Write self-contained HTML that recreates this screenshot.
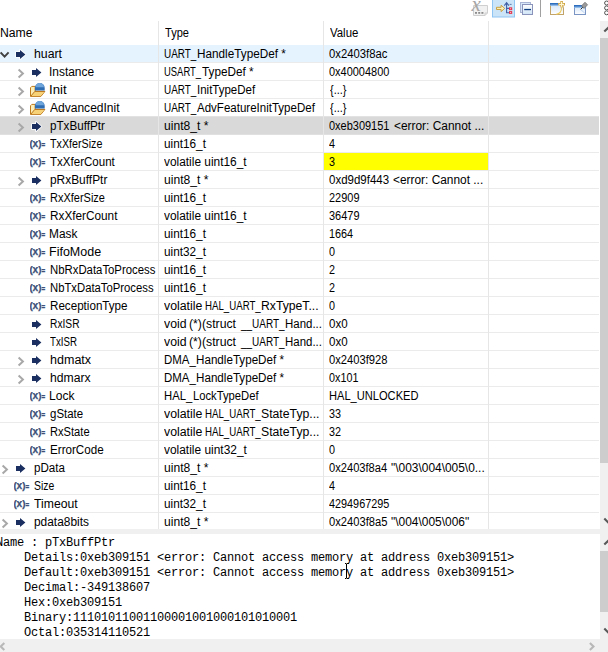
<!DOCTYPE html>
<html><head><meta charset="utf-8"><title>Variables</title>
<style>
html,body{margin:0;padding:0;background:#fff;}
body{width:608px;height:652px;overflow:hidden;position:relative;font-family:"Liberation Sans",sans-serif;font-size:12px;color:#000;}
#tb{position:absolute;left:0;top:0;width:608px;height:21px;background:#fff;}
#tb svg{position:absolute;top:0;}
#tree{position:absolute;left:0;top:21px;width:600px;height:508px;overflow:hidden;background:#fff;}
#hdr{position:absolute;left:0;top:0;width:600px;height:24px;}
#hdr span{position:absolute;top:5px;line-height:14px;white-space:nowrap;transform-origin:0 0;}
.r{position:absolute;left:0;width:599px;height:17px;border-bottom:1px solid #ebebeb;}
.r.hover{background:#e5f3ff;}
.r.sel{background:#d9d9d9;border-bottom-color:#e0e0e0;}
.r span{position:absolute;top:1px;line-height:17px;height:17px;white-space:nowrap;transform-origin:0 0;}
.c{position:absolute;top:0;height:17px;overflow:hidden;}
.r .ic{position:absolute;top:1px;}
.r .ch{position:absolute;top:1px;}
.chg{position:absolute;left:324px;top:0;width:164px;height:17px;background:#ffff00;}
.vl{position:absolute;top:0;width:1px;height:508px;background:#e6e6e6;}
.sb{position:absolute;background:#f0f0f0;}
.th{position:absolute;background:#cdcdcd;}
#sash{position:absolute;left:0;top:529px;width:608px;height:5px;background:#f0f0f0;}
#det{position:absolute;left:0;top:534px;width:600px;height:105px;background:#fff;overflow:hidden;}
#det pre{margin:0;position:absolute;left:-4px;top:2px;font-family:"Liberation Mono",monospace;font-size:12px;line-height:15px;letter-spacing:-0.2px;white-space:pre;}
</style></head><body>

<div id="tb">
<svg width="608" height="21" viewBox="0 0 608 21" style="left:0">
<defs>
<linearGradient id="gb" x1="0" y1="0" x2="0" y2="1"><stop offset="0" stop-color="#cfe3f8"/><stop offset="1" stop-color="#ffffff"/></linearGradient>
<linearGradient id="gc" x1="0" y1="0" x2="0" y2="1"><stop offset="0" stop-color="#ffffff"/><stop offset="1" stop-color="#cfe4f7"/></linearGradient>
</defs>
<!-- icon1: disabled show type names -->
<path d="M473.5 5.5h14v7.5l-2.5 2.5h-11.5z" fill="#f1f1f1" stroke="#cfcfcf"/>
<path d="M485 15.5v-2.5h2.5" fill="none" stroke="#cfcfcf"/>
<rect x="475" y="12" width="2" height="1.8" fill="#8c8c8c"/><rect x="478.2" y="12" width="2" height="1.8" fill="#8c8c8c"/><rect x="481.4" y="12" width="2" height="1.8" fill="#8c8c8c"/>
<text x="471.6" y="11.2" font-family="Liberation Serif, serif" font-style="italic" font-size="21" fill="#a6a6a6">x</text>
<!-- icon2: selected bg -->
<rect x="492.5" y="-3" width="22" height="20" fill="#cce4f7" stroke="#8fc5f2"/>
<path d="M496.5 7.3h4.6V5.2l3.6 3.2-3.6 3.2V9.5h-4.6z" fill="#fdf0b4" stroke="#c9a043" stroke-width="1" stroke-linejoin="round"/>
<path d="M506.6 13.2V3.5M504.3 5.6l2.3-3 2.3 3M506.6 8.4h2.6M506.6 12.8h2.6" fill="none" stroke="#3f5fa6" stroke-width="1.1"/>
<path d="M509.6 4.4h2" stroke="#5f7fb0" stroke-width="1"/>
<rect x="509" y="7.3" width="3.2" height="2.8" fill="#e2344c"/><rect x="509" y="11.1" width="3.2" height="2.8" fill="#e2344c"/>
<rect x="510.1" y="8.2" width="1" height="1" fill="#f9c0c8"/><rect x="510.1" y="12" width="1" height="1" fill="#f9c0c8"/>
<!-- icon3: collapse all -->
<rect x="520.5" y="2.5" width="10" height="10" fill="#d9e8f8" stroke="#a9b3d3"/>
<rect x="522.5" y="4.5" width="10" height="10" fill="url(#gc)" stroke="#8a94bb"/>
<rect x="524.2" y="8.9" width="6.8" height="1.3" fill="#0f3f80"/>
<!-- separator -->
<rect x="540" y="0" width="1" height="17" fill="#a0a0a0"/>
<!-- icon4: new view -->
<rect x="550.5" y="3.5" width="13" height="11" fill="url(#gb)" stroke="#c2a468"/>
<rect x="550" y="3" width="14" height="1.8" fill="#2f6fc0"/>
<rect x="550" y="4.8" width="14" height="1" fill="#7fb0e4"/>
<path d="M556.3 14.2c3.4-.5 5.3-2.6 5.3-6.8" fill="none" stroke="#f0cc58" stroke-width="1.1"/>
<path d="M561.6 1v6.6M558.3 4.3h6.6" fill="none" stroke="#fff" stroke-width="3.6"/>
<path d="M561.6 1v6.6M558.3 4.3h6.6" fill="none" stroke="#c89a2c" stroke-width="2.4"/>
<path d="M561.6 1.8v5M559.1 4.3h5" fill="none" stroke="#fff6d4" stroke-width="1.2"/>
<!-- icon5: pin -->
<rect x="574.5" y="5.5" width="11" height="9" fill="url(#gb)" stroke="#7a94c4"/>
<rect x="574" y="5" width="12" height="1.8" fill="#2f6fc0"/>
<rect x="574" y="6.8" width="12" height="1" fill="#7fb0e4"/>
<path d="M580.6 9.4l2.2-2.2" stroke="#2a2a2a" stroke-width="1"/>
<path d="M583 7.4l-1.4-1.6 3.4-3.6 2.6 2.6-3.4 3.6z" fill="#9a9a9a" stroke="#6e6e6e" stroke-width=".7"/>
<path d="M580.8 9.6l4 3.6" stroke="#a8c4e8" stroke-width=".8"/>
<!-- icon6: view menu (three circles, cropped) -->
<circle cx="606.6" cy="3" r="2" fill="#fff" stroke="#505050" stroke-width="1"/>
<circle cx="606.6" cy="7.9" r="2" fill="#fff" stroke="#505050" stroke-width="1"/>
<circle cx="606.6" cy="12.8" r="2" fill="#fff" stroke="#505050" stroke-width="1"/>
</svg>

</div>
<div id="tree">
<div id="hdr"><span id="h0" style="left:-0.04px;transform:scaleX(1.0174)">Name</span><span id="h1" style="left:165.27px;transform:scaleX(0.9192)">Type</span><span id="h2" style="left:329.76px;transform:scaleX(0.9508)">Value</span></div>
<div class="r hover" style="top:24px"><svg class="ch" style="left:-3px" width="16" height="16" viewBox="0 0 16 16"><path d="M3.6 6.4L7.6 10.6l4-4.2" fill="none" stroke="#404040" stroke-width="1.9"/></svg><svg class="ic" style="left:14px" width="16" height="16" viewBox="0 0 16 16"><path d="M2 6h4V3.9L11.4 8.5 6 13.1V11H2z" fill="#1b2f60" stroke="#fff" stroke-width="1.6" stroke-linejoin="round" paint-order="stroke"/></svg><div class="c" style="left:0;width:158px"><span id="n0" style="left:33.81px;transform:scaleX(1.023)">huart</span></div><div class="c" style="left:159px;width:164px"><span id="t0_0" style="left:4.83px;transform:scaleX(0.8269)">UART_</span><span id="t0_1" style="left:37.75px;transform:scaleX(0.9794)">HandleTypeDef *</span></div><div class="c" style="left:324px;width:164px"><span id="v0" style="left:4.75px;transform:scaleX(0.9425)">0x2403f8ac</span></div></div>
<div class="r" style="top:42px"><svg class="ch" style="left:13px" width="16" height="16" viewBox="0 0 16 16"><path d="M5.6 5.5L9.9 9.5l-4.3 4" fill="none" stroke="#a8a8a8" stroke-width="2"/></svg><svg class="ic" style="left:30px" width="16" height="16" viewBox="0 0 16 16"><path d="M2 6h4V3.9L11.4 8.5 6 13.1V11H2z" fill="#1b2f60" stroke="#fff" stroke-width="1.6" stroke-linejoin="round" paint-order="stroke"/></svg><div class="c" style="left:0;width:158px"><span id="n1" style="left:49.34px;transform:scaleX(0.9935)">Instance</span></div><div class="c" style="left:159px;width:164px"><span id="t1_0" style="left:4.88px;transform:scaleX(0.7855)">USART_</span><span id="t1_1" style="left:42.65px;transform:scaleX(0.9797)">TypeDef *</span></div><div class="c" style="left:324px;width:164px"><span id="v1" style="left:4.76px;transform:scaleX(0.913)">0x40004800</span></div></div>
<div class="r" style="top:60px"><svg class="ch" style="left:13px" width="16" height="16" viewBox="0 0 16 16"><path d="M5.6 5.5L9.9 9.5l-4.3 4" fill="none" stroke="#a8a8a8" stroke-width="2"/></svg><svg class="ic" style="left:30px" width="16" height="16" viewBox="0 0 16 16"><path d="M.5 14.4V5.7l1.3-1.3H5.2v5h9.7l-4 5z" fill="#fdeeb8" stroke="#c07a1c" stroke-width="1" stroke-linejoin="round"/><path d="M1.1 14L4.9 9.6h9.4l-3.6 4.4z" fill="#f8d276"/><path d="M.8 14.2L4.8 9.4h9.9" fill="none" stroke="#b8741a" stroke-width="1"/><path d="M4.9 8.6V6a4.9 4.9 0 0 1 9.8 0v2.6z" fill="#2f6db3"/><path d="M5.6 5.3a4.2 4.2 0 0 1 8.4 0z" fill="#6ea6dc"/></svg><div class="c" style="left:0;width:158px"><span id="n2" style="left:49.21px;transform:scaleX(1.1009)">Init</span></div><div class="c" style="left:159px;width:164px"><span id="t2_0" style="left:4.83px;transform:scaleX(0.8269)">UART_</span><span id="t2_1" style="left:38.18px;transform:scaleX(0.9569)">InitTypeDef</span></div><div class="c" style="left:324px;width:164px"><span id="v2" style="left:5.51px;transform:scaleX(0.9105)">{...}</span></div></div>
<div class="r" style="top:78px;border-bottom-color:#e2e2e2"><svg class="ch" style="left:13px" width="16" height="16" viewBox="0 0 16 16"><path d="M5.6 5.5L9.9 9.5l-4.3 4" fill="none" stroke="#a8a8a8" stroke-width="2"/></svg><svg class="ic" style="left:30px" width="16" height="16" viewBox="0 0 16 16"><path d="M.5 14.4V5.7l1.3-1.3H5.2v5h9.7l-4 5z" fill="#fdeeb8" stroke="#c07a1c" stroke-width="1" stroke-linejoin="round"/><path d="M1.1 14L4.9 9.6h9.4l-3.6 4.4z" fill="#f8d276"/><path d="M.8 14.2L4.8 9.4h9.9" fill="none" stroke="#b8741a" stroke-width="1"/><path d="M4.9 8.6V6a4.9 4.9 0 0 1 9.8 0v2.6z" fill="#2f6db3"/><path d="M5.6 5.3a4.2 4.2 0 0 1 8.4 0z" fill="#6ea6dc"/></svg><div class="c" style="left:0;width:158px"><span id="n3" style="left:50.25px;transform:scaleX(1.0027)">AdvancedInit</span></div><div class="c" style="left:159px;width:164px"><span id="t3_0" style="left:4.83px;transform:scaleX(0.8269)">UART_</span><span id="t3_1" style="left:37.96px;transform:scaleX(0.9602)">AdvFeatureInitTypeDef</span></div><div class="c" style="left:324px;width:164px"><span id="v3" style="left:5.51px;transform:scaleX(0.9105)">{...}</span></div></div>
<div class="r sel" style="top:96px"><svg class="ch" style="left:13px" width="16" height="16" viewBox="0 0 16 16"><path d="M5.6 5.5L9.9 9.5l-4.3 4" fill="none" stroke="#a8a8a8" stroke-width="2"/></svg><svg class="ic" style="left:30px" width="16" height="16" viewBox="0 0 16 16"><path d="M2 6h4V3.9L11.4 8.5 6 13.1V11H2z" fill="#1b2f60" stroke="#fff" stroke-width="1.6" stroke-linejoin="round" paint-order="stroke"/></svg><div class="c" style="left:0;width:158px"><span id="n4" style="left:49.78px;transform:scaleX(0.9698)">pTxBuffPtr</span></div><div class="c" style="left:159px;width:164px"><span id="t4" style="left:5.15px;transform:scaleX(1.0074)">uint8_t *</span></div><div class="c" style="left:324px;width:164px"><span id="v4_0" style="left:4.96px;transform:scaleX(0.9149)">0xeb309151 </span><span id="v4_1" style="left:69.51px;transform:scaleX(0.9921)">&lt;error: Cannot ...</span></div></div>
<div class="r" style="top:114px"><svg class="ic" style="left:30px" width="16" height="16" viewBox="0 0 16 16" font-family="Liberation Sans, sans-serif" font-weight="bold" fill="#3b4f78" stroke="#3b4f78" stroke-width=".25"><text x="-0.5" y="11.1" font-size="9.8">(</text><text x="2.6" y="11.1" font-size="10.6" textLength="5.7" lengthAdjust="spacingAndGlyphs">x</text><text x="8.2" y="11.1" font-size="9.8">)</text><text x="11.6" y="11.5" font-size="8.6" textLength="3.7" lengthAdjust="spacingAndGlyphs">=</text></svg><div class="c" style="left:0;width:158px"><span id="n5" style="left:50.28px;transform:scaleX(0.8919)">TxXferSize</span></div><div class="c" style="left:159px;width:164px"><span id="t5" style="left:5.17px;transform:scaleX(0.9813)">uint16_t</span></div><div class="c" style="left:324px;width:164px"><span id="v5" style="left:5.0px;transform:scaleX(0.9)">4</span></div></div>
<div class="r" style="top:132px"><div class="chg"></div><svg class="ic" style="left:30px" width="16" height="16" viewBox="0 0 16 16" font-family="Liberation Sans, sans-serif" font-weight="bold" fill="#3b4f78" stroke="#3b4f78" stroke-width=".25"><text x="-0.5" y="11.1" font-size="9.8">(</text><text x="2.6" y="11.1" font-size="10.6" textLength="5.7" lengthAdjust="spacingAndGlyphs">x</text><text x="8.2" y="11.1" font-size="9.8">)</text><text x="11.6" y="11.5" font-size="8.6" textLength="3.7" lengthAdjust="spacingAndGlyphs">=</text></svg><div class="c" style="left:0;width:158px"><span id="n6" style="left:50.26px;transform:scaleX(0.9619)">TxXferCount</span></div><div class="c" style="left:159px;width:164px"><span id="t6" style="left:5.05px;transform:scaleX(0.9908)">volatile uint16_t</span></div><div class="c" style="left:324px;width:164px"><span id="v6" style="left:5.0px;transform:scaleX(0.9)">3</span></div></div>
<div class="r" style="top:150px"><svg class="ch" style="left:13px" width="16" height="16" viewBox="0 0 16 16"><path d="M5.6 5.5L9.9 9.5l-4.3 4" fill="none" stroke="#a8a8a8" stroke-width="2"/></svg><svg class="ic" style="left:30px" width="16" height="16" viewBox="0 0 16 16"><path d="M2 6h4V3.9L11.4 8.5 6 13.1V11H2z" fill="#1b2f60" stroke="#fff" stroke-width="1.6" stroke-linejoin="round" paint-order="stroke"/></svg><div class="c" style="left:0;width:158px"><span id="n7" style="left:49.76px;transform:scaleX(0.9925)">pRxBuffPtr</span></div><div class="c" style="left:159px;width:164px"><span id="t7" style="left:5.15px;transform:scaleX(1.0074)">uint8_t *</span></div><div class="c" style="left:324px;width:164px"><span id="v7_0" style="left:4.94px;transform:scaleX(0.9573)">0xd9d9f443 </span><span id="v7_1" style="left:68.71px;transform:scaleX(0.991)">&lt;error: Cannot ...</span></div></div>
<div class="r" style="top:168px"><svg class="ic" style="left:30px" width="16" height="16" viewBox="0 0 16 16" font-family="Liberation Sans, sans-serif" font-weight="bold" fill="#3b4f78" stroke="#3b4f78" stroke-width=".25"><text x="-0.5" y="11.1" font-size="9.8">(</text><text x="2.6" y="11.1" font-size="10.6" textLength="5.7" lengthAdjust="spacingAndGlyphs">x</text><text x="8.2" y="11.1" font-size="9.8">)</text><text x="11.6" y="11.5" font-size="8.6" textLength="3.7" lengthAdjust="spacingAndGlyphs">=</text></svg><div class="c" style="left:0;width:158px"><span id="n8" style="left:49.57px;transform:scaleX(0.915)">RxXferSize</span></div><div class="c" style="left:159px;width:164px"><span id="t8" style="left:5.17px;transform:scaleX(0.9813)">uint16_t</span></div><div class="c" style="left:324px;width:164px"><span id="v8" style="left:4.64px;transform:scaleX(0.9131)">22909</span></div></div>
<div class="r" style="top:186px"><svg class="ic" style="left:30px" width="16" height="16" viewBox="0 0 16 16" font-family="Liberation Sans, sans-serif" font-weight="bold" fill="#3b4f78" stroke="#3b4f78" stroke-width=".25"><text x="-0.5" y="11.1" font-size="9.8">(</text><text x="2.6" y="11.1" font-size="10.6" textLength="5.7" lengthAdjust="spacingAndGlyphs">x</text><text x="8.2" y="11.1" font-size="9.8">)</text><text x="11.6" y="11.5" font-size="8.6" textLength="3.7" lengthAdjust="spacingAndGlyphs">=</text></svg><div class="c" style="left:0;width:158px"><span id="n9" style="left:49.5px;transform:scaleX(0.9814)">RxXferCount</span></div><div class="c" style="left:159px;width:164px"><span id="t9" style="left:5.05px;transform:scaleX(0.9908)">volatile uint16_t</span></div><div class="c" style="left:324px;width:164px"><span id="v9" style="left:4.6px;transform:scaleX(0.9142)">36479</span></div></div>
<div class="r" style="top:204px"><svg class="ic" style="left:30px" width="16" height="16" viewBox="0 0 16 16" font-family="Liberation Sans, sans-serif" font-weight="bold" fill="#3b4f78" stroke="#3b4f78" stroke-width=".25"><text x="-0.5" y="11.1" font-size="9.8">(</text><text x="2.6" y="11.1" font-size="10.6" textLength="5.7" lengthAdjust="spacingAndGlyphs">x</text><text x="8.2" y="11.1" font-size="9.8">)</text><text x="11.6" y="11.5" font-size="8.6" textLength="3.7" lengthAdjust="spacingAndGlyphs">=</text></svg><div class="c" style="left:0;width:158px"><span id="n10" style="left:49.49px;transform:scaleX(0.99)">Mask</span></div><div class="c" style="left:159px;width:164px"><span id="t10" style="left:5.17px;transform:scaleX(0.9813)">uint16_t</span></div><div class="c" style="left:324px;width:164px"><span id="v10" style="left:4.8px;transform:scaleX(0.903)">1664</span></div></div>
<div class="r" style="top:222px"><svg class="ic" style="left:30px" width="16" height="16" viewBox="0 0 16 16" font-family="Liberation Sans, sans-serif" font-weight="bold" fill="#3b4f78" stroke="#3b4f78" stroke-width=".25"><text x="-0.5" y="11.1" font-size="9.8">(</text><text x="2.6" y="11.1" font-size="10.6" textLength="5.7" lengthAdjust="spacingAndGlyphs">x</text><text x="8.2" y="11.1" font-size="9.8">)</text><text x="11.6" y="11.5" font-size="8.6" textLength="3.7" lengthAdjust="spacingAndGlyphs">=</text></svg><div class="c" style="left:0;width:158px"><span id="n11" style="left:49.44px;transform:scaleX(1.0419)">FifoMode</span></div><div class="c" style="left:159px;width:164px"><span id="t11" style="left:5.17px;transform:scaleX(0.9813)">uint32_t</span></div><div class="c" style="left:324px;width:164px"><span id="v11" style="left:5.0px;transform:scaleX(0.9)">0</span></div></div>
<div class="r" style="top:240px"><svg class="ic" style="left:30px" width="16" height="16" viewBox="0 0 16 16" font-family="Liberation Sans, sans-serif" font-weight="bold" fill="#3b4f78" stroke="#3b4f78" stroke-width=".25"><text x="-0.5" y="11.1" font-size="9.8">(</text><text x="2.6" y="11.1" font-size="10.6" textLength="5.7" lengthAdjust="spacingAndGlyphs">x</text><text x="8.2" y="11.1" font-size="9.8">)</text><text x="11.6" y="11.5" font-size="8.6" textLength="3.7" lengthAdjust="spacingAndGlyphs">=</text></svg><div class="c" style="left:0;width:158px"><span id="n12" style="left:49.53px;transform:scaleX(0.9462)">NbRxDataToProcess</span></div><div class="c" style="left:159px;width:164px"><span id="t12" style="left:5.17px;transform:scaleX(0.9813)">uint16_t</span></div><div class="c" style="left:324px;width:164px"><span id="v12" style="left:5.0px;transform:scaleX(0.9)">2</span></div></div>
<div class="r" style="top:258px"><svg class="ic" style="left:30px" width="16" height="16" viewBox="0 0 16 16" font-family="Liberation Sans, sans-serif" font-weight="bold" fill="#3b4f78" stroke="#3b4f78" stroke-width=".25"><text x="-0.5" y="11.1" font-size="9.8">(</text><text x="2.6" y="11.1" font-size="10.6" textLength="5.7" lengthAdjust="spacingAndGlyphs">x</text><text x="8.2" y="11.1" font-size="9.8">)</text><text x="11.6" y="11.5" font-size="8.6" textLength="3.7" lengthAdjust="spacingAndGlyphs">=</text></svg><div class="c" style="left:0;width:158px"><span id="n13" style="left:49.54px;transform:scaleX(0.9414)">NbTxDataToProcess</span></div><div class="c" style="left:159px;width:164px"><span id="t13" style="left:5.17px;transform:scaleX(0.9813)">uint16_t</span></div><div class="c" style="left:324px;width:164px"><span id="v13" style="left:5.0px;transform:scaleX(0.9)">2</span></div></div>
<div class="r" style="top:276px"><svg class="ic" style="left:30px" width="16" height="16" viewBox="0 0 16 16" font-family="Liberation Sans, sans-serif" font-weight="bold" fill="#3b4f78" stroke="#3b4f78" stroke-width=".25"><text x="-0.5" y="11.1" font-size="9.8">(</text><text x="2.6" y="11.1" font-size="10.6" textLength="5.7" lengthAdjust="spacingAndGlyphs">x</text><text x="8.2" y="11.1" font-size="9.8">)</text><text x="11.6" y="11.5" font-size="8.6" textLength="3.7" lengthAdjust="spacingAndGlyphs">=</text></svg><div class="c" style="left:0;width:158px"><span id="n14" style="left:49.51px;transform:scaleX(0.9687)">ReceptionType</span></div><div class="c" style="left:159px;width:164px"><span id="t14_0" style="left:4.95px;transform:scaleX(1.0271)">volatile </span><span id="t14_1" style="left:46.28px;transform:scaleX(0.806)">HAL_UART_</span><span id="t14_2" style="left:102.06px;transform:scaleX(1.0152)">RxTypeT...</span></div><div class="c" style="left:324px;width:164px"><span id="v14" style="left:5.0px;transform:scaleX(0.9)">0</span></div></div>
<div class="r" style="top:294px"><svg class="ic" style="left:30px" width="16" height="16" viewBox="0 0 16 16"><path d="M2 6h4V3.9L11.4 8.5 6 13.1V11H2z" fill="#1b2f60" stroke="#fff" stroke-width="1.6" stroke-linejoin="round" paint-order="stroke"/></svg><div class="c" style="left:0;width:158px"><span id="n15" style="left:49.63px;transform:scaleX(0.8524)">RxISR</span></div><div class="c" style="left:159px;width:164px"><span id="t15_0" style="left:4.95px;transform:scaleX(1.0221)">void </span><span id="t15_1" style="left:30.14px;transform:scaleX(1.0224)">(*)(struct </span><span id="t15_2" style="left:81.66px;transform:scaleX(0.8321)">__UART_</span><span id="t15_3" style="left:125.82px;transform:scaleX(0.9543)">Hand...</span></div><div class="c" style="left:324px;width:164px"><span id="v15" style="left:4.74px;transform:scaleX(0.9631)">0x0</span></div></div>
<div class="r" style="top:312px"><svg class="ic" style="left:30px" width="16" height="16" viewBox="0 0 16 16"><path d="M2 6h4V3.9L11.4 8.5 6 13.1V11H2z" fill="#1b2f60" stroke="#fff" stroke-width="1.6" stroke-linejoin="round" paint-order="stroke"/></svg><div class="c" style="left:0;width:158px"><span id="n16" style="left:50.3px;transform:scaleX(0.8089)">TxISR</span></div><div class="c" style="left:159px;width:164px"><span id="t16_0" style="left:4.95px;transform:scaleX(1.0221)">void </span><span id="t16_1" style="left:30.14px;transform:scaleX(1.0224)">(*)(struct </span><span id="t16_2" style="left:81.66px;transform:scaleX(0.8321)">__UART_</span><span id="t16_3" style="left:125.82px;transform:scaleX(0.9543)">Hand...</span></div><div class="c" style="left:324px;width:164px"><span id="v16" style="left:4.74px;transform:scaleX(0.9631)">0x0</span></div></div>
<div class="r" style="top:330px"><svg class="ch" style="left:13px" width="16" height="16" viewBox="0 0 16 16"><path d="M5.6 5.5L9.9 9.5l-4.3 4" fill="none" stroke="#a8a8a8" stroke-width="2"/></svg><svg class="ic" style="left:30px" width="16" height="16" viewBox="0 0 16 16"><path d="M2 6h4V3.9L11.4 8.5 6 13.1V11H2z" fill="#1b2f60" stroke="#fff" stroke-width="1.6" stroke-linejoin="round" paint-order="stroke"/></svg><div class="c" style="left:0;width:158px"><span id="n17" style="left:49.7px;transform:scaleX(1.0444)">hdmatx</span></div><div class="c" style="left:159px;width:164px"><span id="t17_0" style="left:4.78px;transform:scaleX(0.9539)">DMA_</span><span id="t17_1" style="left:37.21px;transform:scaleX(0.9699)">HandleTypeDef *</span></div><div class="c" style="left:324px;width:164px"><span id="v17" style="left:4.75px;transform:scaleX(0.9322)">0x2403f928</span></div></div>
<div class="r" style="top:348px"><svg class="ch" style="left:13px" width="16" height="16" viewBox="0 0 16 16"><path d="M5.6 5.5L9.9 9.5l-4.3 4" fill="none" stroke="#a8a8a8" stroke-width="2"/></svg><svg class="ic" style="left:30px" width="16" height="16" viewBox="0 0 16 16"><path d="M2 6h4V3.9L11.4 8.5 6 13.1V11H2z" fill="#1b2f60" stroke="#fff" stroke-width="1.6" stroke-linejoin="round" paint-order="stroke"/></svg><div class="c" style="left:0;width:158px"><span id="n18" style="left:49.72px;transform:scaleX(1.0155)">hdmarx</span></div><div class="c" style="left:159px;width:164px"><span id="t18_0" style="left:4.78px;transform:scaleX(0.9539)">DMA_</span><span id="t18_1" style="left:37.21px;transform:scaleX(0.9699)">HandleTypeDef *</span></div><div class="c" style="left:324px;width:164px"><span id="v18" style="left:4.77px;transform:scaleX(0.8996)">0x101</span></div></div>
<div class="r" style="top:366px"><svg class="ic" style="left:30px" width="16" height="16" viewBox="0 0 16 16" font-family="Liberation Sans, sans-serif" font-weight="bold" fill="#3b4f78" stroke="#3b4f78" stroke-width=".25"><text x="-0.5" y="11.1" font-size="9.8">(</text><text x="2.6" y="11.1" font-size="10.6" textLength="5.7" lengthAdjust="spacingAndGlyphs">x</text><text x="8.2" y="11.1" font-size="9.8">)</text><text x="11.6" y="11.5" font-size="8.6" textLength="3.7" lengthAdjust="spacingAndGlyphs">=</text></svg><div class="c" style="left:0;width:158px"><span id="n19" style="left:49.47px;transform:scaleX(1.0056)">Lock</span></div><div class="c" style="left:159px;width:164px"><span id="t19_0" style="left:4.79px;transform:scaleX(0.9408)">HAL_</span><span id="t19_1" style="left:33.64px;transform:scaleX(0.9357)">LockTypeDef</span></div><div class="c" style="left:324px;width:164px"><span id="v19" style="left:4.55px;transform:scaleX(0.9253)">HAL_UNLOCKED</span></div></div>
<div class="r" style="top:384px"><svg class="ic" style="left:30px" width="16" height="16" viewBox="0 0 16 16" font-family="Liberation Sans, sans-serif" font-weight="bold" fill="#3b4f78" stroke="#3b4f78" stroke-width=".25"><text x="-0.5" y="11.1" font-size="9.8">(</text><text x="2.6" y="11.1" font-size="10.6" textLength="5.7" lengthAdjust="spacingAndGlyphs">x</text><text x="8.2" y="11.1" font-size="9.8">)</text><text x="11.6" y="11.5" font-size="8.6" textLength="3.7" lengthAdjust="spacingAndGlyphs">=</text></svg><div class="c" style="left:0;width:158px"><span id="n20" style="left:49.99px;transform:scaleX(0.9557)">gState</span></div><div class="c" style="left:159px;width:164px"><span id="t20_0" style="left:4.95px;transform:scaleX(1.0271)">volatile </span><span id="t20_1" style="left:46.28px;transform:scaleX(0.806)">HAL_UART_</span><span id="t20_2" style="left:102.31px;transform:scaleX(1.0199)">StateTyp...</span></div><div class="c" style="left:324px;width:164px"><span id="v20" style="left:5.0px;transform:scaleX(0.9)">33</span></div></div>
<div class="r" style="top:402px"><svg class="ic" style="left:30px" width="16" height="16" viewBox="0 0 16 16" font-family="Liberation Sans, sans-serif" font-weight="bold" fill="#3b4f78" stroke="#3b4f78" stroke-width=".25"><text x="-0.5" y="11.1" font-size="9.8">(</text><text x="2.6" y="11.1" font-size="10.6" textLength="5.7" lengthAdjust="spacingAndGlyphs">x</text><text x="8.2" y="11.1" font-size="9.8">)</text><text x="11.6" y="11.5" font-size="8.6" textLength="3.7" lengthAdjust="spacingAndGlyphs">=</text></svg><div class="c" style="left:0;width:158px"><span id="n21" style="left:49.55px;transform:scaleX(0.9272)">RxState</span></div><div class="c" style="left:159px;width:164px"><span id="t21_0" style="left:4.95px;transform:scaleX(1.0271)">volatile </span><span id="t21_1" style="left:46.28px;transform:scaleX(0.806)">HAL_UART_</span><span id="t21_2" style="left:102.31px;transform:scaleX(1.0199)">StateTyp...</span></div><div class="c" style="left:324px;width:164px"><span id="v21" style="left:5.0px;transform:scaleX(0.9)">32</span></div></div>
<div class="r" style="top:420px"><svg class="ic" style="left:30px" width="16" height="16" viewBox="0 0 16 16" font-family="Liberation Sans, sans-serif" font-weight="bold" fill="#3b4f78" stroke="#3b4f78" stroke-width=".25"><text x="-0.5" y="11.1" font-size="9.8">(</text><text x="2.6" y="11.1" font-size="10.6" textLength="5.7" lengthAdjust="spacingAndGlyphs">x</text><text x="8.2" y="11.1" font-size="9.8">)</text><text x="11.6" y="11.5" font-size="8.6" textLength="3.7" lengthAdjust="spacingAndGlyphs">=</text></svg><div class="c" style="left:0;width:158px"><span id="n22" style="left:49.51px;transform:scaleX(0.9688)">ErrorCode</span></div><div class="c" style="left:159px;width:164px"><span id="t22" style="left:4.95px;transform:scaleX(0.9932)">volatile uint32_t</span></div><div class="c" style="left:324px;width:164px"><span id="v22" style="left:5.0px;transform:scaleX(0.9)">0</span></div></div>
<div class="r" style="top:438px"><svg class="ch" style="left:-3px" width="16" height="16" viewBox="0 0 16 16"><path d="M5.6 5.5L9.9 9.5l-4.3 4" fill="none" stroke="#a8a8a8" stroke-width="2"/></svg><svg class="ic" style="left:14px" width="16" height="16" viewBox="0 0 16 16"><path d="M2 6h4V3.9L11.4 8.5 6 13.1V11H2z" fill="#1b2f60" stroke="#fff" stroke-width="1.6" stroke-linejoin="round" paint-order="stroke"/></svg><div class="c" style="left:0;width:158px"><span id="n23" style="left:33.78px;transform:scaleX(0.9663)">pData</span></div><div class="c" style="left:159px;width:164px"><span id="t23" style="left:5.15px;transform:scaleX(1.0074)">uint8_t *</span></div><div class="c" style="left:324px;width:164px"><span id="v23_0" style="left:4.95px;transform:scaleX(0.9276)">0x2403f8a4 </span><span id="v23_1" style="left:66.82px;transform:scaleX(0.9937)">&quot;\003\004\005\0...</span></div></div>
<div class="r" style="top:456px"><svg class="ic" style="left:14px" width="16" height="16" viewBox="0 0 16 16" font-family="Liberation Sans, sans-serif" font-weight="bold" fill="#3b4f78" stroke="#3b4f78" stroke-width=".25"><text x="-0.5" y="11.1" font-size="9.8">(</text><text x="2.6" y="11.1" font-size="10.6" textLength="5.7" lengthAdjust="spacingAndGlyphs">x</text><text x="8.2" y="11.1" font-size="9.8">)</text><text x="11.6" y="11.5" font-size="8.6" textLength="3.7" lengthAdjust="spacingAndGlyphs">=</text></svg><div class="c" style="left:0;width:158px"><span id="n24" style="left:33.82px;transform:scaleX(0.8681)">Size</span></div><div class="c" style="left:159px;width:164px"><span id="t24" style="left:5.17px;transform:scaleX(0.9813)">uint16_t</span></div><div class="c" style="left:324px;width:164px"><span id="v24" style="left:5.0px;transform:scaleX(0.9)">4</span></div></div>
<div class="r" style="top:474px"><svg class="ic" style="left:14px" width="16" height="16" viewBox="0 0 16 16" font-family="Liberation Sans, sans-serif" font-weight="bold" fill="#3b4f78" stroke="#3b4f78" stroke-width=".25"><text x="-0.5" y="11.1" font-size="9.8">(</text><text x="2.6" y="11.1" font-size="10.6" textLength="5.7" lengthAdjust="spacingAndGlyphs">x</text><text x="8.2" y="11.1" font-size="9.8">)</text><text x="11.6" y="11.5" font-size="8.6" textLength="3.7" lengthAdjust="spacingAndGlyphs">=</text></svg><div class="c" style="left:0;width:158px"><span id="n25" style="left:34.24px;transform:scaleX(1.0173)">Timeout</span></div><div class="c" style="left:159px;width:164px"><span id="t25" style="left:5.17px;transform:scaleX(0.9813)">uint32_t</span></div><div class="c" style="left:324px;width:164px"><span id="v25" style="left:4.75px;transform:scaleX(0.903)">4294967295</span></div></div>
<div class="r" style="top:492px"><svg class="ch" style="left:-3px" width="16" height="16" viewBox="0 0 16 16"><path d="M5.6 5.5L9.9 9.5l-4.3 4" fill="none" stroke="#a8a8a8" stroke-width="2"/></svg><svg class="ic" style="left:14px" width="16" height="16" viewBox="0 0 16 16"><path d="M2 6h4V3.9L11.4 8.5 6 13.1V11H2z" fill="#1b2f60" stroke="#fff" stroke-width="1.6" stroke-linejoin="round" paint-order="stroke"/></svg><div class="c" style="left:0;width:158px"><span id="n26" style="left:33.76px;transform:scaleX(0.9917)">pdata8bits</span></div><div class="c" style="left:159px;width:164px"><span id="t26" style="left:5.15px;transform:scaleX(1.0074)">uint8_t *</span></div><div class="c" style="left:324px;width:164px"><span id="v26_0" style="left:4.95px;transform:scaleX(0.9306)">0x2403f8a5 </span><span id="v26_1" style="left:66.82px;transform:scaleX(0.9952)">&quot;\004\005\006&quot;</span></div></div>
<div class="vl" style="left:158px"></div>
<div class="vl" style="left:323px"></div>
<div class="vl" style="left:488px"></div>
</div>
<div class="sb" style="left:600px;top:21px;width:17px;height:508px"></div>
<div class="th" style="left:600px;top:38px;width:17px;height:425px"></div>
<svg style="position:absolute;left:600px;top:21px" width="17" height="17" viewBox="0 0 17 17"><path d="M4.3 10.6L8.5 6.4l4.2 4.2" fill="none" stroke="#585858" stroke-width="2.1"/></svg>
<svg style="position:absolute;left:600px;top:512px" width="17" height="17" viewBox="0 0 17 17"><path d="M4.3 6.6L8.5 10.8l4.2-4.2" fill="none" stroke="#585858" stroke-width="2.1"/></svg>
<div id="sash"></div>
<div id="det"><pre>
Name : pTxBuffPtr
    Details:0xeb309151 &lt;error: Cannot access memory at address 0xeb309151&gt;
    Default:0xeb309151 &lt;error: Cannot access memory at address 0xeb309151&gt;
    Decimal:-349138607
    Hex:0xeb309151
    Binary:11101011001100001001000101010001
    Octal:035314110521
</pre></div>
<div class="sb" style="left:600px;top:534px;width:17px;height:105px"></div>
<div class="th" style="left:600px;top:551px;width:17px;height:61px"></div>
<svg style="position:absolute;left:600px;top:534px" width="17" height="17" viewBox="0 0 17 17"><path d="M4.3 10.6L8.5 6.4l4.2 4.2" fill="none" stroke="#585858" stroke-width="2.1"/></svg>
<svg style="position:absolute;left:600px;top:622px" width="17" height="17" viewBox="0 0 17 17"><path d="M4.3 6.6L8.5 10.8l4.2-4.2" fill="none" stroke="#585858" stroke-width="2.1"/></svg>
<div class="sb" style="left:0;top:639px;width:617px;height:17px"></div>
<svg style="position:absolute;left:-6px;top:638px" width="17" height="17" viewBox="0 0 17 17"><path d="M10.3 4.9L6.7 8.5l3.6 3.6" fill="none" stroke="#b8b8b8" stroke-width="2.1"/></svg>
<svg style="position:absolute;left:583px;top:638px" width="17" height="17" viewBox="0 0 17 17"><path d="M6.9 4.9L10.5 8.5l-3.6 3.6" fill="none" stroke="#b8b8b8" stroke-width="2.1"/></svg>
<svg style="position:absolute;left:343px;top:563px" width="7" height="16" viewBox="0 0 7 16"><path d="M2 .5h1l.5 .5 .5-.5h2M3.5 1v14M2 15.5h1l.5-.5 .5 .5h1.5" fill="none" stroke="#000" stroke-width="1"/></svg>
</body></html>
